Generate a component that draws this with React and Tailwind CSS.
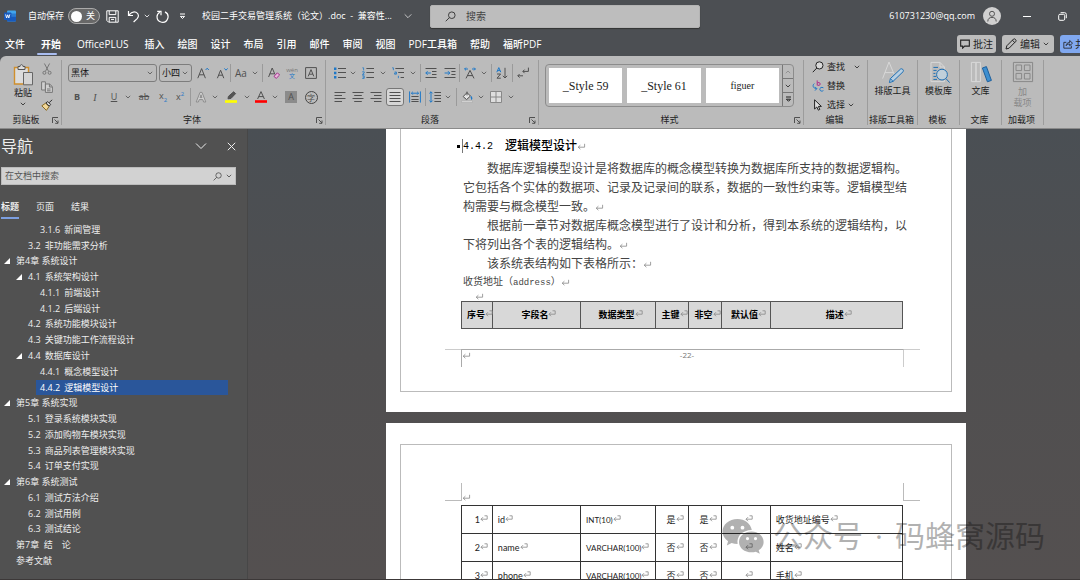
import React, { useState } from 'react';

const outline = [
  { id: 1, level: 3, no: '3.1.6', title: '新闻管理' },
  { id: 2, level: 2, no: '3.2', title: '非功能需求分析' },
  { id: 3, level: 1, no: '', title: '第4章 系统设计', open: true },
  { id: 4, level: 2, no: '4.1', title: '系统架构设计', open: true },
  { id: 5, level: 3, no: '4.1.1', title: '前端设计' },
  { id: 6, level: 3, no: '4.1.2', title: '后端设计' },
  { id: 7, level: 2, no: '4.2', title: '系统功能模块设计' },
  { id: 8, level: 2, no: '4.3', title: '关键功能工作流程设计' },
  { id: 9, level: 2, no: '4.4', title: '数据库设计', open: true },
  { id: 10, level: 3, no: '4.4.1', title: '概念模型设计' },
  { id: 11, level: 3, no: '4.4.2', title: '逻辑模型设计' },
  { id: 12, level: 1, no: '', title: '第5章 系统实现', open: true },
  { id: 13, level: 2, no: '5.1', title: '登录系统模块实现' },
  { id: 14, level: 2, no: '5.2', title: '添加购物车模块实现' },
  { id: 15, level: 2, no: '5.3', title: '商品列表管理模块实现' },
  { id: 16, level: 2, no: '5.4', title: '订单支付实现' },
  { id: 17, level: 1, no: '', title: '第6章 系统测试', open: true },
  { id: 18, level: 2, no: '6.1', title: '测试方法介绍' },
  { id: 19, level: 2, no: '6.2', title: '测试用例' },
  { id: 20, level: 2, no: '6.3', title: '测试结论' },
  { id: 21, level: 1, no: '', title: '第7章  结　论' },
  { id: 22, level: 1, no: '', title: '参考文献' },
];

const fields = [
  { no: 1, name: 'id', type: 'INT(10)', pk: '是', notNull: '是', desc: '收货地址编号' },
  { no: 2, name: 'name', type: 'VARCHAR(100)', pk: '否', notNull: '否', desc: '姓名' },
  { no: 3, name: 'phone', type: 'VARCHAR(100)', pk: '否', notNull: '否', desc: '手机' },
];

const mainMenus = ['文件', '开始', 'OfficePLUS'];
const menus = ['插入', '绘图', '设计', '布局', '引用', '邮件', '审阅', '视图', 'PDF工具箱', '帮助', '福昕PDF'];

const Svg = ({ className = 'size-3', box = '0 0 12 12', children }) => (
  <svg className={`shrink-0 ${className}`} viewBox={box} fill="none" stroke="currentColor" strokeWidth="1" aria-hidden="true">
    {children}
  </svg>
);

const Chevron = ({ className = 'size-[6px]' }) => (
  <Svg className={className} box="0 0 6 6">
    <path strokeWidth="0.8" d="M0.8 1.8 3 4 5.2 1.8" />
  </Svg>
);

const WideChevron = ({ className = 'size-2' }) => (
  <Svg className={className} box="0 0 12 12">
    <path d="M1 3.5 6 8.5 11 3.5" />
  </Svg>
);

const Tool = ({ label, className = 'w-5', children }) => (
  <button type="button" aria-label={label} className={`flex h-[18px] shrink-0 items-center justify-center ${className}`}>
    {children}
  </button>
);

const More = ({ label }) => (
  <Tool label={`${label}选项`} className="w-2">
    <Chevron />
  </Tool>
);

const Bar = ({ className = '' }) => <span className={`h-[18px] w-px shrink-0 bg-[#9a9a9a] ${className}`}></span>;

const Group = ({ label, className = '', launcher, children }) => (
  <section className={`mt-1 mb-[3px] flex shrink-0 flex-col border-r border-[#9c9c9c] pt-1 ${className}`}>
    <div className="flex-1">{children}</div>
    <div className="flex h-[10px] items-center pr-[2px]">
      <span className="flex-1 text-center leading-[10px] whitespace-nowrap text-[#222]">{label}</span>
      {launcher && (
        <button type="button" aria-label={`${label}设置`}>
          <Svg className="size-[7px]" box="0 0 7 7">
            <path d="M0.5 6V0.5H6M2.5 2.5 6 6M6 3.5V6.3H3.2" />
          </Svg>
        </button>
      )}
    </div>
  </section>
);

// lines of a paragraph-alignment glyph, each [x1, x2]
const Lines = ({ rows }) => (
  <Svg>
    {rows.map(([a, b], i) => (
      <path key={i} d={`M${a} ${1.5 + i * 3}H${b}`} />
    ))}
  </Svg>
);

const Enter = () => (
  <svg className="inline-block h-[7px] w-[9px] shrink-0" viewBox="0 0 9 7" fill="none" stroke="#888" strokeWidth="0.8" aria-hidden="true">
    <path d="M7.6 0.8V4.2H1.2M3.4 2.2 1.2 4.2 3.4 6.2" />
  </svg>
);

const CellEnd = () => (
  <svg className="inline-block h-[7px] w-[8px] align-[1px]" viewBox="0 0 8 7" fill="none" stroke="#888" strokeWidth="0.8" aria-hidden="true">
    <path d="M4.5 0.8H7.2V4.2H1M3 2.2 1 4.2 3 6.2" />
  </svg>
);

const TitleBar = () => {
  const [autoSave, setAutoSave] = useState(false);

  return (
    <div className="flex h-8 shrink-0 items-center text-[9px] text-white">
      <svg className="ml-1 size-3 shrink-0" viewBox="0 0 12 12" aria-hidden="true">
        <rect x="3" y="0.5" width="9" height="11" rx="1" fill="#41a5ee" />
        <path d="M3 3.5h9v3H3z" fill="#2b7cd3" />
        <path d="M3 6.5h9v4a1 1 0 0 1-1 1H4a1 1 0 0 1-1-1z" fill="#185abd" />
        <rect x="0" y="2.5" width="7.4" height="7.4" rx="0.8" fill="#185abd" />
        <path d="M1.6 4.4 2.6 8 3.7 4.8 4.8 8 5.8 4.4" fill="none" stroke="#fff" strokeWidth="0.9" />
      </svg>
      <label className="ml-3 flex shrink-0 items-center gap-1">
        自动保存
        <input type="checkbox" className="peer sr-only" checked={autoSave} onChange={() => setAutoSave(!autoSave)} />
        <span className="flex h-4 w-8 items-center gap-1 rounded-full border border-[#aaa] bg-[#686868] pl-[2px]">
          <span className="size-[11px] rounded-full bg-white"></span>
          {autoSave ? '开' : '关'}
        </span>
      </label>
      <button type="button" aria-label="保存" className="ml-[6px]">
        <Svg className="size-[13px]" box="0 0 13 13">
          <path d="M0.8 0.8H12.2V12.2H2.6L0.8 10.4ZM3.2 0.8V4.6H9.8V0.8M3.2 12V7.4H9.8V12M5 9.4h3" />
        </Svg>
      </button>
      <button type="button" aria-label="撤消" className="ml-2">
        <Svg className="size-[13px]" box="0 0 13 13">
          <path strokeWidth="1.2" d="M1.5 1V5.5H6M1.8 5.2C4 2.4 6.5 1.2 9 2.2c3 1.3 3 4.6 1.2 6.4L6.6 12" />
        </Svg>
      </button>
      <button type="button" aria-label="撤消选项" className="ml-1"><Chevron /></button>
      <button type="button" aria-label="重复" className="ml-[6px]">
        <Svg className="size-[13px]" box="0 0 13 13">
          <path strokeWidth="1.2" d="M3.8 2.200C2 3.200 1 4.800 1 6.800a5.500 5.500 0 1 0 8-4.900M5 5.200V1.400H1.200" />
        </Svg>
      </button>
      <button type="button" aria-label="自定义快速访问工具栏" className="ml-[10px]">
        <Svg className="size-[7px]" box="0 0 7 7">
          <path d="M1 1H6M1.4 3.4 3.5 5.5 5.6 3.4Z" />
        </Svg>
      </button>
      <button type="button" className="ml-4 flex shrink-0 items-center gap-3 whitespace-pre">
        校园二手交易管理系统（论文）.doc  -  兼容性...
        <WideChevron />
      </button>
      <label className="ml-[18px] flex h-[23px] w-1/4 items-center gap-[10px] rounded-[2px] border border-[#b4b4b4] bg-[#bdbdbd] px-[14px] text-[#333] shadow-[0_1px_1px_#333]">
        <Svg className="size-[11px]">
          <circle cx="7.4" cy="4.6" r="3.6" />
          <path d="M4.8 7.2 0.8 11.2" />
        </Svg>
        <input type="text" aria-label="搜索" placeholder="搜索" className="w-full bg-transparent text-[10px] outline-none placeholder:text-[#444]" />
      </label>
      <div className="ml-auto flex items-center pr-[13px]">
        <span className="font-medium">610731230@qq.com</span>
        <span className="ml-2 flex size-[18px] items-center justify-center rounded-full bg-[#d0d0d0] text-[#555]">
          <Svg>
            <circle cx="6" cy="3.8" r="2.5" />
            <path d="M1.8 11.5C1.8 8.6 3.6 7.4 6 7.4s4.2 1.2 4.2 4.1" />
          </Svg>
        </span>
        <button type="button" aria-label="最小化" className="ml-[22px]">
          <Svg className="size-2" box="0 0 8 8"><path d="M0 4.5H8" /></Svg>
        </button>
        <button type="button" aria-label="还原" className="ml-[27px]">
          <Svg className="size-[9px]" box="0 0 9 9">
            <rect x="0.7" y="2.3" width="6" height="6" rx="1.2" />
            <path d="M2.6 0.7H6.6a1.7 1.7 0 0 1 1.7 1.7V6.2" />
          </Svg>
        </button>
      </div>
    </div>
  );
};

const MenuBar = () => {
  const [current, setCurrent] = useState('开始');

  const renderItem = (item) => (
    <button
      key={item}
      type="button"
      onClick={() => setCurrent(item)}
      className={`relative h-[22px] ${item === current ? 'font-bold' : 'font-medium'}`}
    >
      {item}
      {item === current && <span className="absolute bottom-0 -left-1 h-[2px] w-5 rounded bg-[#a9bdf0]"></span>}
    </button>
  );

  return (
    <div className="flex h-6 shrink-0 items-center text-[10px] text-white">
      <nav className="flex gap-4 pl-[5px] whitespace-nowrap">
        {mainMenus.map(renderItem)}
        <div className="flex gap-[13px]">{menus.map(renderItem)}</div>
      </nav>
      <div className="ml-auto flex items-center gap-[6px] text-[#222]">
        <button type="button" className="flex h-[18px] items-center gap-[3px] rounded-[3px] bg-[#bdbdbd] px-[3px]">
          <Svg className="size-[10px]" box="0 0 9 9"><path d="M0.6 1H8.4V6.4H4.2L2.4 8.2V6.4H0.6Z" /></Svg>
          批注
        </button>
        <button type="button" className="flex h-[18px] items-center gap-[3px] rounded-[3px] bg-[#bdbdbd] pr-[5px] pl-[3px]">
          <Svg><path d="M1 11 1.8 7.8 8.6 1C9.6 0.2 11.8 2.2 10.9 3.3L4.1 10.2ZM7.4 2.2 9.8 4.6" /></Svg>
          编辑
          <Chevron />
        </button>
        <button type="button" aria-label="共享" className="flex h-[18px] w-5 items-center gap-[2px] overflow-hidden rounded-l-[3px] bg-[#80a8f0] pl-[3px]">
          <Svg className="size-[10px]">
            <path d="M4 4H1V11H10V8M3.8 8C4 5.6 5.4 4.2 8 4.2V1.8L11.4 5 8 8V6C6.2 6 4.8 6.6 3.8 8Z" />
          </Svg>
          共
        </button>
      </div>
    </div>
  );
};

const Combo = ({ label, value, className }) => (
  <div className={`relative shrink-0 ${className}`}>
    <select aria-label={label} className="h-[18px] w-full appearance-none rounded-[3px] border border-[#7d7d7d] bg-transparent pl-[2px] text-[#111]">
      <option>{value}</option>
    </select>
    <Chevron className="pointer-events-none absolute top-[6px] right-1 size-[6px]" />
  </div>
);

const Ribbon = () => (
  <div className="flex h-[73px] shrink-0 rounded-tl-md border-b border-[#8a8a8a] bg-[#bbbbbb] text-[9px] text-[#505050]">
    <Group label="剪贴板" launcher className="w-[62px]">
      <div className="flex pl-3">
        <button type="button" className="flex w-[22px] flex-col items-center whitespace-nowrap text-[#222]">
          <svg className="h-[22px] w-[22px]" viewBox="0 0 22 22" fill="none" aria-hidden="true">
            <path d="M2.5 3.5H16.5V20H2.5Z" fill="#dcdcdc" stroke="#d08f2c" strokeWidth="1.4" />
            <path d="M6 2.5H8C8.2 0 10.8 0 11 2.5H13V5.5H6Z" fill="#ddd" stroke="#555" />
            <path d="M11.5 8.5H20.5V20.8H11.5Z" fill="#d4d4d4" stroke="#666" />
          </svg>
          粘贴
          <Chevron className="mt-[1px] size-[6px]" />
        </button>
        <div className="ml-[5px] flex flex-col text-[#777]">
          <Tool label="剪切" className="-mt-1 w-4">
            <Svg><path d="M3.4 0.5 7.6 8.4M8.6 0.5 4.4 8.4" /><circle cx="3.4" cy="9.8" r="1.5" /><circle cx="8.6" cy="9.8" r="1.5" /></Svg>
          </Tool>
          <Tool label="复制" className="w-4">
            <Svg><path d="M0.6 0.8H4.4V9H0.6ZM4.4 3H8.6L11.4 5.6V11.4H4.4ZM8.4 3V6H11.2M6 8h3.6M6 9.8h3.6" fill="#d0d0d0" /></Svg>
          </Tool>
          <Tool label="格式刷" className="w-4">
            <Svg>
              <path d="M0.8 6.8 4.6 4.2 8 7.6 5.4 11.4Z" fill="#f0d79a" stroke="#8a6a20" />
              <path d="M5 3.8 6.8 2.6 9.6 5.4 8.2 7.2ZM8.2 3.6 11.2 0.8" fill="#ddd" stroke="#333" />
            </Svg>
          </Tool>
        </div>
      </div>
    </Group>

    <Group label="字体" launcher className="w-[264px] pl-[6px]">
      <div className="flex items-center">
        <Combo label="字体" value="黑体" className="w-[89px]" />
        <Combo label="字号" value="小四" className="ml-[2px] w-[33px]" />
        <Tool label="增大字号" className="w-[22px]">
          <Svg><path d="M0.8 11.2 4.6 1.6 8.4 11.2M2.2 7.8H7" /><path d="M8.6 3 10.2 1.2 11.8 3" stroke="#1e78c8" /></Svg>
        </Tool>
        <Tool label="减小字号" className="w-4">
          <Svg><path d="M1.4 11.2 4.6 3.2 7.8 11.2M2.6 8.2H6.6" /><path d="M8.4 1.4 10 3.2 11.6 1.4" stroke="#1e78c8" /></Svg>
        </Tool>
        <Bar />
        <Tool label="更改大小写" className="w-5"><span className="text-[10px]">Aa</span></Tool>
        <More label="更改大小写" />
        <Bar className="ml-[3px]" />
        <Tool label="清除所有格式" className="w-[22px]">
          <Svg><path d="M0.6 10 4.2 1 7 7.6M1.8 6.8H6" /><path d="M6 9.4 9.4 5.8 11.6 8 8.2 11.4Z" fill="#e9b6dc" stroke="#a0308a" /></Svg>
        </Tool>
        <Tool label="拼音指南" className="w-[14px]">
          <span className="flex flex-col text-[6px] leading-[6px]"><span className="text-[#777]">wén</span><span className="text-[#1e78c8]">文</span></span>
        </Tool>
        <Tool label="字符边框" className="w-6">
          <Svg><path d="M0.6 0.6H11.4V11.4H0.6ZM3.2 9.4 6 2.6 8.8 9.4M4.2 7.2H7.8" /></Svg>
        </Tool>
      </div>
      <div className="mt-[6px] flex items-center">
        <Tool label="加粗" className="w-[18px]"><b>B</b></Tool>
        <Tool label="倾斜" className="w-[18px]"><i className="font-['Liberation_Serif'] text-[10px]">I</i></Tool>
        <Tool label="下划线" className="w-5"><span className="underline">U</span></Tool>
        <More label="下划线" />
        <Tool label="删除线" className="w-6"><s>ab</s></Tool>
        <Tool label="下标" className="w-[14px]"><span>x<span className="align-[-3px] text-[6px] text-[#1e78c8]">2</span></span></Tool>
        <Tool label="上标" className="w-5"><span>x<span className="align-[4px] text-[6px] text-[#1e78c8]">2</span></span></Tool>
        <Bar />
        <Tool label="文本效果" className="w-5">
          <Svg><path d="M1.2 11 5 1.4H7L10.8 11H8.6L7.8 8.6H4.2L3.4 11ZM5 6.6H7L6 3.8Z" stroke="#8e8e8e" fill="#d0d0d0" /></Svg>
        </Tool>
        <More label="文本效果" />
        <Tool label="突出显示" className="w-6">
          <Svg>
            <path d="M3.4 5.4 8.6 0.8 10.6 2.6 6 7.4 3 7.8Z" fill="#555" />
            <path d="M0 9.2H12V11.8H0Z" fill="#ffff00" stroke="none" />
          </Svg>
        </Tool>
        <More label="突出显示" />
        <Tool label="字体颜色" className="w-5">
          <Svg><path d="M2.6 8 6 0.6 9.4 8M3.8 5.6H8.2" /><path d="M0 9.2H12V11.8H0Z" fill="#f00" stroke="none" /></Svg>
        </Tool>
        <More label="字体颜色" />
        <Tool label="字符底纹" className="w-6"><span className="size-3 bg-[#8b8b8b] leading-3">A</span></Tool>
        <Tool label="带圈字符" className="w-4"><span className="size-[13px] rounded-full border border-[#444] text-[8px] leading-[11px]">字</span></Tool>
      </div>
    </Group>

    <Group label="段落" launcher className="w-[213px] pl-[5px]">
      <div className="flex items-center">
        <Tool label="项目符号" className="w-[18px]">
          <Svg><path d="M4 1.5H12M4 5.5H12M4 10.5H12" /><path d="M0 0.6H2.4V3H0ZM0 4.8H2.4V7.2H0ZM0 9H2.4V11.4H0Z" fill="#1e78c8" stroke="none" /></Svg>
        </Tool>
        <More label="项目符号" />
        <Tool label="编号" className="w-[22px]">
          <Svg><path d="M4.4 1.5H12M4.4 5.5H12M4.4 10.5H12" /><path d="M0.4 0.8H1.6V3.4M0.2 4.8H2.2V6L0.4 7.4H2.4M0.2 8.8H2.2V11.4H0.2M0.8 10.1H2.2" stroke="#1e78c8" strokeWidth="0.8" /></Svg>
        </Tool>
        <More label="编号" />
        <Tool label="多级列表" className="w-[22px]">
          <Svg><path d="M3.4 1.5H12M6.2 5.5H12M8.6 10.5H12" /><path d="M0.2 0.8H1.4V3.2M2.6 5H4.4V7.2H2.6V6H4.4M6.4 8.8V11.2" stroke="#1e78c8" strokeWidth="0.8" /></Svg>
        </Tool>
        <More label="多级列表" />
        <Bar className="ml-[3px]" />
        <Tool label="减少缩进量">
          <Svg><path d="M0.5 1.5H11.5M7 4.5H11.5M7 7.5H11.5M0.5 10.5H11.5" /><path d="M5.8 6H0.8M2.6 4.2 0.8 6 2.6 7.8" stroke="#1e78c8" /></Svg>
        </Tool>
        <Tool label="增加缩进量" className="w-[18px]">
          <Svg><path d="M0.5 1.5H11.5M7.4 4.5H11.5M7.4 7.5H11.5M0.5 10.5H11.5" /><path d="M0.6 6H5.8M4 4.2 5.8 6 4 7.8" stroke="#1e78c8" /></Svg>
        </Tool>
        <Bar />
        <Tool label="中文版式">
          <Svg><path d="M2 11.4 6 3.4 10 11.4M3.4 8.6H8.6" /><path d="M4 2H0.6M2 0.6 0.6 2 2 3.4M8 2H11.4M10 0.6 11.4 2 10 3.4" stroke="#1e78c8" /></Svg>
        </Tool>
        <More label="中文版式" />
        <Bar className="ml-[3px]" />
        <Tool label="排序">
          <Svg><path d="M0.8 5.2 2.8 0.6 4.8 5.2M1.6 3.6H4" stroke="#1e78c8" /><path d="M1 7H4.6L1 11.2H4.8M9 0.8V11M6.8 8.8 9 11 11.2 8.8" /></Svg>
        </Tool>
        <Bar />
        <Tool label="显示编辑标记">
          <Svg><path d="M11.4 0.6V4.4H6M7.600 2.600 5.800 4.400 7.600 6.200M6 8.800H0.800M2.600 7 0.800 8.800 2.600 10.600" /></Svg>
        </Tool>
      </div>
      <div className="mt-[6px] flex items-center">
        <Tool label="左对齐" className="w-[18px]"><Lines rows={[[0.5, 11.5], [0.5, 8], [0.5, 11.5], [0.5, 8]]} /></Tool>
        <Tool label="居中" className="w-[18px]"><Lines rows={[[0.5, 11.5], [2.2, 9.8], [0.5, 11.5], [2.2, 9.8]]} /></Tool>
        <Tool label="右对齐" className="w-[18px]"><Lines rows={[[0.5, 11.5], [4, 11.5], [0.5, 11.5], [4, 11.5]]} /></Tool>
        <Tool label="两端对齐">
          <span className="flex h-[18px] w-[18px] items-center justify-center rounded-[3px] border border-[#777] bg-[#d6d6d6]">
            <Lines rows={[[0.5, 11.5], [0.5, 11.5], [0.5, 11.5], [0.5, 11.5]]} />
          </span>
        </Tool>
        <Tool label="分散对齐">
          <Svg><path d="M2.4 5.5H9.6M2.4 8.5H9.6M2.4 10.5H9.6" /><path d="M0.6 0.4V11.6M11.4 0.4V11.6M2.4 2.2H9.6M3.8 0.8 2.4 2.2 3.8 3.6M8.2 0.8 9.6 2.2 8.2 3.6" stroke="#1e78c8" /></Svg>
        </Tool>
        <Bar />
        <Tool label="行和段落间距" className="w-[18px]">
          <Svg><path d="M5.4 1.5H12M5.4 4.5H12M5.4 7.5H12M5.4 10.5H12" /><path d="M2 0.8V11.2M0.4 2.4 2 0.8 3.6 2.4M0.4 9.6 2 11.2 3.6 9.6" stroke="#1e78c8" /></Svg>
        </Tool>
        <More label="行距" />
        <Bar className="ml-1" />
        <Tool label="底纹">
          <Svg><path d="M2.2 5.6 6 1.6 9.4 5 5.6 8.6ZM6 0.6V4.4" fill="#e4e4e4" /><path d="M9.8 5.4C11 7 11 8 10 8.2" stroke="#1e78c8" strokeWidth="1.4" /><path d="M0.5 9.8H11.5V11.4H0.5Z" fill="#ddd" stroke="#999" strokeWidth="0.4" /></Svg>
        </Tool>
        <More label="底纹" />
        <Tool label="边框" className="w-[22px]">
          <Svg><path d="M0.5 0.5H11.5V11.5H0.5ZM6 0.5V11.5M0.5 6H11.5" fill="#dedede" stroke="#888" /></Svg>
        </Tool>
        <More label="边框" />
      </div>
    </Group>

    <Group label="样式" launcher className="w-[265px] pl-[6px]">
      <div className="mr-[9px] flex h-[43px] rounded-[4px] border border-[#8c8c8c] text-[12px] text-[#222]">
        <div className="flex flex-1 gap-[5px] p-[3px]">
          <button type="button" className="flex-1 bg-white font-['Liberation_Serif']">_Style 59</button>
          <button type="button" className="flex-1 bg-white font-['Liberation_Serif']">_Style 61</button>
          <button type="button" className="flex-1 bg-white font-['Liberation_Serif'] text-[10px]">figuer</button>
        </div>
        <div className="flex w-[11px] flex-col divide-y divide-[#777] border-l border-[#777]">
          <button type="button" aria-label="上一行" className="flex flex-1 items-center justify-center text-[#888]"><Chevron className="size-[6px] rotate-180" /></button>
          <button type="button" aria-label="下一行" className="flex flex-1 items-center justify-center"><Chevron /></button>
          <button type="button" aria-label="其他样式" className="flex flex-1 items-center justify-center">
            <Svg className="size-[7px]" box="0 0 7 7"><path d="M1 1H6M1.4 3.2 3.5 5.3 5.6 3.2Z" /></Svg>
          </button>
        </div>
      </div>
    </Group>

    <Group label="编辑" className="w-16">
      <div className="-mt-[6px] flex flex-col gap-px pl-2 text-[#222]">
        <button type="button" className="flex h-[18px] items-center gap-[3px]">
          <Svg><circle cx="7.4" cy="4.4" r="3.6" fill="#d8d8d8" /><path d="M4.8 7 0.8 11.2" /></Svg>
          查找
          <Chevron className="ml-[6px] size-[6px]" />
        </button>
        <button type="button" className="flex h-[18px] items-center gap-[3px]">
          <Svg>
            <path d="M5.2 0.4V5.4M5.2 3.2C6 2 8.2 2.4 8.2 4 8.2 5.6 6 5.8 5.2 4.8" stroke="#b0308a" />
            <path d="M2.4 3.6C0.4 4.6 0.4 8.4 4.6 8.6M3 6.8 4.8 8.6 3 10.6M11.4 7.8C9.4 6.6 7.6 8 7.8 9.4 8 11.2 10 11.6 11.4 10.6" stroke="#1e78c8" />
          </Svg>
          替换
        </button>
        <button type="button" className="flex h-[18px] items-center gap-[3px]">
          <Svg><path d="M2.6 0.8V10L4.8 8 6.4 11.2 7.8 10.4 6.4 7.4H9.4Z" fill="#ddd" /></Svg>
          选择
          <Chevron />
        </button>
      </div>
    </Group>

    <Group label="排版工具箱" className="w-[50px]">
      <button type="button" className="-mt-1 flex w-full flex-col items-center whitespace-nowrap text-[#222]">
        <Svg className="size-6" box="0 0 24 24">
          <path d="M1.6 18.6 8 2 13 14M4 12.6H12" stroke="#d8d8d8" />
          <path d="M8.4 22.6 9.4 18.6 19.6 9C21 8 23.2 10.2 22.2 11.6L12 21.4ZM9.4 18.6 12 21.4" stroke="#1e6fb4" fill="#b8cfe2" />
        </Svg>
        排版工具
      </button>
    </Group>

    <Group label="模板" className="w-[42px]">
      <button type="button" className="-mt-1 flex w-full flex-col items-center whitespace-nowrap text-[#222]">
        <Svg className="size-6" box="0 0 24 24">
          <path d="M4 2.4H13L17.4 7V21.6H4ZM13 2.4V7H17.4" stroke="#d8d8d8" />
          <path d="M6.4 7.4H11M6.4 10.4H9.6M6.4 13.4H8.4M6.4 16.4H9M6.4 19.4H10" stroke="#1e6fb4" />
          <circle cx="15" cy="14.6" r="5.4" stroke="#1e6fb4" fill="#c0cfda" />
          <path d="M19 18.6 22.6 22.6" stroke="#1e6fb4" />
        </Svg>
        模板库
      </button>
    </Group>

    <Group label="文库" className="w-[42px]">
      <button type="button" className="-mt-1 flex w-full flex-col items-center whitespace-nowrap text-[#222]">
        <Svg className="size-6" box="0 0 24 24">
          <path d="M2.4 2.4H7V21.6H2.4ZM7 2.4H11.4V21.6H7Z" stroke="#d8d8d8" />
          <path d="M13.4 8 17.4 6.6 22.4 20.4 18.4 21.8Z" fill="#3d8fd0" stroke="#1e5f9c" />
        </Svg>
        文库
      </button>
    </Group>

    <Group label="加载项" className="w-[42px]">
      <button type="button" className="-mt-1 flex w-full flex-col items-center gap-[2px] leading-[11px] text-[#888]">
        <Svg className="size-6" box="0 0 24 24">
          <path d="M2.4 2.4H21.6V21.6H2.4ZM5 5H10.6V10.6H5ZM13.4 5H19V10.6H13.4ZM5 13.4H10.6V19H5ZM13.4 13.4H19V19H13.4Z" />
        </Svg>
        <span>加<br />载项</span>
      </button>
    </Group>
  </div>
);

const indent = { 1: 'pl-1', 2: 'pl-4', 3: 'pl-7' };

const NavPane = () => {
  const [selected, setSelected] = useState(11);

  return (
    <aside className="flex w-[248px] shrink-0 flex-col border-r border-[#474747] bg-[#515151] pb-[10px] text-[9px] text-[#eee]">
      <div className="flex h-8 items-center pt-[2px] pr-[11px] pl-px">
        <h2 className="text-[16px]">导航</h2>
        <button type="button" aria-label="任务窗格选项" className="ml-auto"><WideChevron className="size-3" /></button>
        <button type="button" aria-label="关闭" className="ml-5">
          <Svg className="size-[9px]" box="0 0 9 9"><path d="M0.8 0.8 8.2 8.2M8.2 0.8 0.8 8.2" /></Svg>
        </button>
      </div>
      <label className="mt-[6px] mr-[11px] ml-px flex h-[18px] items-center gap-1 border border-[#bbb] bg-[#d2d2d2] px-[3px] text-[#444]">
        <input type="text" aria-label="在文档中搜索" placeholder="在文档中搜索" className="w-full bg-transparent outline-none placeholder:text-[#555]" />
        <Svg className="size-[9px]"><circle cx="7.4" cy="4.6" r="3.6" /><path d="M4.8 7.2 0.8 11.2" /></Svg>
        <Chevron />
      </label>
      <div className="mt-3 flex h-[25px] shrink-0 items-start gap-[17px] pl-px">
        <button type="button" className="h-[22px] border-b-2 border-[#7d9fe0] font-bold">标题</button>
        <button type="button" className="h-[22px] border-b-2 border-transparent">页面</button>
        <button type="button" className="h-[22px] border-b-2 border-transparent">结果</button>
      </div>
      <ul className="flex min-h-0 flex-1 flex-col">
        {outline.map((item) => (
          <li key={item.id} className={`flex min-h-0 flex-1 items-center pr-[19px] ${indent[item.level]}`}>
            <span className="flex w-2 shrink-0 items-center">
              {item.open && (
                <svg className="size-[6px]" viewBox="0 0 6 6" aria-hidden="true"><path d="M6 0V6H0Z" fill="#fff" /></svg>
              )}
            </span>
            <button
              type="button"
              onClick={() => setSelected(item.id)}
              className={`flex h-full flex-1 items-center gap-1 pl-1 text-left leading-3 whitespace-pre ${item.id === selected ? 'bg-[#2a569a] text-white' : ''}`}
            >
              {item.no && <span>{item.no}</span>}
              <span>{item.title}</span>
            </button>
          </li>
        ))}
      </ul>
    </aside>
  );
};

const Columns = () => (
  <colgroup>
    <col className="w-[7%]" />
    <col className="w-[20%]" />
    <col className="w-[17%]" />
    <col className="w-[7.5%]" />
    <col className="w-[7.5%]" />
    <col className="w-[11%]" />
    <col className="w-[30%]" />
  </colgroup>
);

const Document = () => (
  <main className="min-w-0 flex-1 overflow-hidden pl-6">
    <div className="mx-auto flex w-[580px] flex-col gap-[11px] text-[#444]">
      <article className="bg-white px-[14px] pb-5">
        <div className="border-x border-b border-[#bbb] pt-2 pr-12 pb-6 pl-[60px]">
          <h3 className="-ml-1 flex h-[18px] items-center text-[12px] font-medium text-black">
            <span className="mr-[2px] size-[3px] bg-black"></span>
            <span className="h-[14px] w-px bg-[#777]"></span>
            <span className="font-['Liberation_Mono'] text-[10px]">4.4.2</span>
            <span className="ml-3">逻辑模型设计</span>
            <Enter />
          </h3>
          <div className="mt-1 pl-[2px] text-[12px] leading-[19px] whitespace-nowrap">
            <p>　　数据库逻辑模型设计是将数据库的概念模型转换为数据库所支持的数据逻辑构。<br />它包括各个实体的数据项、记录及记录间的联系，数据的一致性约束等。逻辑模型结<br />构需要与概念模型一致。<Enter /></p>
            <p>　　根据前一章节对数据库概念模型进行了设计和分析，得到本系统的逻辑结构，以<br />下将列出各个表的逻辑结构。<Enter /></p>
            <p>　　该系统表结构如下表格所示：<Enter /></p>
          </div>
          <p className="pl-[2px] text-[10px] leading-4">收货地址（<span className="font-['Liberation_Mono'] text-[9px]">address</span>）<Enter /></p>
          <div className="flex h-[10px] items-center pl-[14px]"><Enter /></div>
          <table className="h-7 w-full table-fixed border-collapse text-[9px] text-black">
            <Columns />
            <thead>
              <tr className="bg-[#d8d8d8]">
                {['序号', '字段名', '数据类型', '主键', '非空', '默认值', '描述'].map((h) => (
                  <th key={h} scope="col" className="border border-[#555] p-0 pl-[5px] font-bold whitespace-nowrap">{h}<CellEnd /></th>
                ))}
              </tr>
            </thead>
          </table>
          <div className="mt-5 -mr-[17px] -ml-4 flex h-[18px] text-[8px] leading-[10px] text-[#777]">
            <span className="h-px w-4 bg-[#ccc]"></span>
            <span className="flex-1 border-x border-t border-[#aaa] border-r-[#ccc] text-center">
              <span className="float-left"><Enter /></span>
              -22-
            </span>
            <span className="h-px w-4 bg-[#ccc]"></span>
          </div>
        </div>
      </article>

      <article className="bg-white px-[14px] pt-[21px]">
        <div className="border-x border-t border-[#bbb] pt-[38px] pr-12 pl-[60px]">
          <div className="-mr-[17px] -ml-4 flex h-[18px] items-end text-[#aaa]">
            <span className="h-px w-4 bg-[#bbb]"></span>
            <span className="flex h-full flex-1 items-end border-x border-[#bbb]"><Enter /></span>
            <span className="h-px w-4 bg-[#bbb]"></span>
          </div>
          <table className="mt-1 w-full table-fixed border-collapse text-[9px] text-[#222]">
            <Columns />
            <tbody className="font-[Lato,'Noto_Sans_CJK_SC',sans-serif]">
              {fields.map((f) => (
                <tr key={f.no} className="h-7">
                  <td className="border border-[#333] py-0 pr-1 pl-0 text-right">{f.no}<CellEnd /></td>
                  <td className="border border-[#333] px-[5px] py-0">{f.name}<CellEnd /></td>
                  <td className="border border-[#333] px-[5px] py-0 text-[8px] whitespace-nowrap">{f.type}<CellEnd /></td>
                  <td className="border border-[#333] p-0 pl-[6px] text-center">{f.pk}<CellEnd /></td>
                  <td className="border border-[#333] p-0 pl-[6px] text-center">{f.notNull}<CellEnd /></td>
                  <td className="border border-[#333] p-0 pl-[6px] text-center"><CellEnd /></td>
                  <td className="border border-[#333] px-[5px] py-0">{f.desc}<CellEnd /></td>
                </tr>
              ))}
            </tbody>
          </table>
        </div>
      </article>
    </div>
  </main>
);

const Watermark = () => (
  <div className="pointer-events-none absolute right-[35px] bottom-6 flex items-center text-[30px] leading-10 whitespace-nowrap text-black opacity-30">
    <svg className="mr-[9px] h-[36px] w-[42px]" viewBox="0 0 42 36" aria-hidden="true">
      <path
        fillRule="evenodd"
        fill="currentColor"
        d="M15.5 1C7 1 .5 6.6.5 13.6c0 4 2.200 7.400 5.600 9.700L4.800 27.500l4.800-2.500c1.900.6 3.900.9 6 .9C14.400 18 20.500 12.200 29.800 12 28.600 5.600 22.700 1 15.500 1ZM10.300 7.800a1.900 1.900 0 1 1 0 3.800 1.900 1.900 0 0 1 0-3.800ZM20.500 7.800a1.900 1.900 0 1 1 0 3.800 1.900 1.900 0 0 1 0-3.800Z"
      />
      <path
        fillRule="evenodd"
        fill="currentColor"
        d="M29.500 13.400c-7 0-12.500 4.600-12.500 10.500S22.500 34.300 29.500 34.300c1.500 0 3-.2 4.300-.6l4 2.100-1.100-3.500c3-1.900 4.900-4.900 4.900-8.400 0-5.900-5.400-10.500-12.100-10.500ZM25.500 19a1.600 1.600 0 1 1 0 3.200 1.600 1.600 0 0 1 0-3.200ZM33.500 19a1.600 1.600 0 1 1 0 3.200 1.600 1.600 0 0 1 0-3.200Z"
      />
    </svg>
    <span>公众号</span>
    <span className="mx-3">·</span>
    <span>码蜂窝源码</span>
  </div>
);

const App = () => {
  return (
    <div className="relative flex h-screen flex-col overflow-hidden bg-[#4c4f53] font-['Open_Sans','Noto_Sans_CJK_SC',sans-serif]">
      <TitleBar />
      <MenuBar />
      <Ribbon />
      <div className="flex min-h-0 flex-1 border-b border-[#3c3838] bg-linear-to-b from-[#4a4f54] via-[#504f50] to-[#545050]">
        <NavPane />
        <Document />
      </div>
      <Watermark />
    </div>
  );
};

export default App;
